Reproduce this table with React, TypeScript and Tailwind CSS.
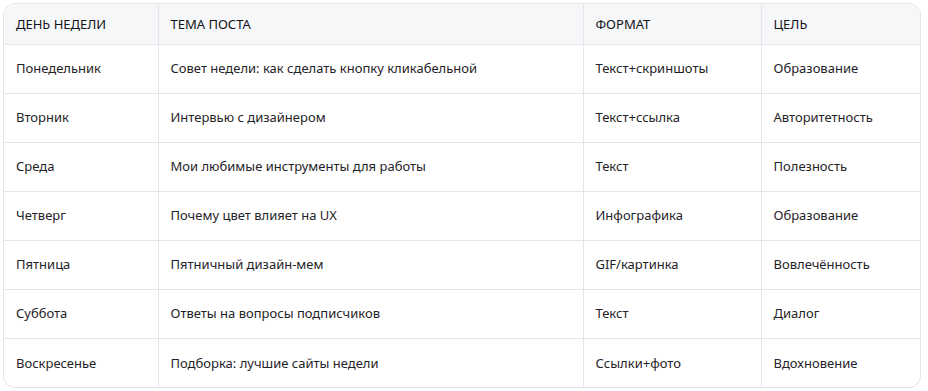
const rows = [
  ["Понедельник", "Совет недели: как сделать кнопку кликабельной", "Текст+скриншоты", "Образование"],
  ["Вторник", "Интервью с дизайнером", "Текст+ссылка", "Авторитетность"],
  ["Среда", "Мои любимые инструменты для работы", "Текст", "Полезность"],
  ["Четверг", "Почему цвет влияет на UX", "Инфографика", "Образование"],
  ["Пятница", "Пятничный дизайн-мем", "GIF/картинка", "Вовлечённость"],
  ["Суббота", "Ответы на вопросы подписчиков", "Текст", "Диалог"],
  ["Воскресенье", "Подборка: лучшие сайты недели", "Ссылки+фото", "Вдохновение"],
];

const headers = ["ДЕНЬ НЕДЕЛИ", "ТЕМА ПОСТА", "ФОРМАТ", "ЦЕЛЬ"];

export default function App() {
  return (
    <div className="bg-white w-[928px] h-[391px] pt-[3px] pl-[3px] font-['Noto_Sans',sans-serif] text-[13px] text-[#1f2328]">
      <div className="w-[918px] rounded-xl border border-[#e3e5ea] overflow-hidden">
        <table className="w-full border-collapse table-fixed">
          <colgroup>
            <col className="w-[154px]" />
            <col className="w-[425px]" />
            <col className="w-[178px]" />
            <col />
          </colgroup>
          <thead>
            <tr className="bg-[#f6f7f9] h-[40px]">
              {headers.map((h, i) => (
                <th
                  key={h}
                  className={`text-left font-normal text-[#111318] px-3 pt-px ${i > 0 ? "border-l border-[#e3e5ea]" : ""}`}
                >
                  {h}
                </th>
              ))}
            </tr>
          </thead>
          <tbody>
            {rows.map((r) => (
              <tr key={r[0]} className="h-[49px] border-t border-[#e3e5ea]">
                {r.map((c, i) => (
                  <td key={i} className={`px-3 pt-px ${i > 0 ? "border-l border-[#e3e5ea]" : ""}`}>
                    {c}
                  </td>
                ))}
              </tr>
            ))}
          </tbody>
        </table>
      </div>
    </div>
  );
}
